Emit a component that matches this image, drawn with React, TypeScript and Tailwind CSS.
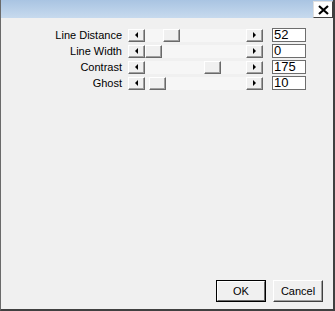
import React from "react";

const rows = [
  { label: "Line Distance", value: "52", thumb: 35 },
  { label: "Line Width", value: "0", thumb: 17 },
  { label: "Contrast", value: "175", thumb: 76 },
  { label: "Ghost", value: "10", thumb: 21 },
];

function ArrowBtn({ dir }: { dir: "left" | "right" }) {
  return (
    <div className="w-[17px] h-[13px] bg-[#f0f0f0] border-t border-l border-t-white border-l-white border-r border-b border-r-[#696969] border-b-[#696969] shadow-[inset_-1px_-1px_0_#a0a0a0] flex items-center justify-center">
      {dir === "left" ? (
        <div className="w-0 h-0 border-y-[3px] border-y-transparent border-r-[3px] border-r-black" />
      ) : (
        <div className="w-0 h-0 border-y-[3px] border-y-transparent border-l-[3px] border-l-black" />
      )}
    </div>
  );
}

function Scroll({ thumb }: { thumb: number }) {
  return (
    <div className="relative w-[135px] h-[13px] bg-[#f6f6f6] flex justify-between">
      <ArrowBtn dir="left" />
      <div
        className="absolute top-0 w-[17px] h-[13px] bg-[#f0f0f0] border-t border-l border-t-white border-l-white border-r border-b border-r-[#696969] border-b-[#696969] shadow-[inset_-1px_-1px_0_#a0a0a0]"
        style={{ left: thumb }}
      />
      <ArrowBtn dir="right" />
    </div>
  );
}

export default function App() {
  return (
    <div
      className="w-[335px] h-[311px] bg-[#f0f0f0] flex flex-col border-l border-l-[#6a6a6a] border-r-2 border-r-[#404040] border-b-2 border-b-[#404040]"
      style={{ fontFamily: '"Liberation Sans", Arial, sans-serif' }}
    >
      <div className="h-[18px] bg-gradient-to-b from-[#a9c4e2] to-[#c7daee] flex justify-end items-start pt-[1px]">
        <div className="w-[20px] h-[17px] bg-white border-r border-b border-r-[#404040] border-b-[#404040] border-t border-l border-t-[#e0e0e0] border-l-[#e0e0e0] flex items-center justify-center">
          <svg width="11" height="10" viewBox="0 0 11 10">
            <path d="M1 1 L10 9 M10 1 L1 9" stroke="black" strokeWidth="2.2" />
          </svg>
        </div>
      </div>
      <div className="flex flex-col pt-[10px] gap-[2px]">
        {rows.map((r) => (
          <div key={r.label} className="flex items-center h-[14px]">
            <div className="w-[121px] text-right text-[11px] leading-[14px] text-black">{r.label}</div>
            <div className="ml-[6px]">
              <Scroll thumb={r.thumb} />
            </div>
            <div className="ml-[9px] w-[34px] h-[14px] bg-white border border-[#6d6d6d] text-[13px] leading-[12px] pl-[1px] text-black">
              {r.value}
            </div>
          </div>
        ))}
      </div>
      <div className="flex-1" />
      <div className="flex justify-end gap-[7px] pr-[10px] pb-[7px]">
        <div className="w-[50px] h-[22px] border border-black">
          <div className="w-full h-full bg-[#f0f0f0] border-t border-l border-t-white border-l-white border-r border-b border-r-[#696969] border-b-[#696969] flex items-center justify-center text-[11px] text-black">
            OK
          </div>
        </div>
        <div className="w-[50px] h-[22px] bg-[#f0f0f0] border-t border-l border-t-white border-l-white border-r border-b border-r-[#404040] border-b-[#404040] shadow-[inset_-1px_-1px_0_#a0a0a0] flex items-center justify-center text-[11px] text-black">
          Cancel
        </div>
      </div>
    </div>
  );
}
